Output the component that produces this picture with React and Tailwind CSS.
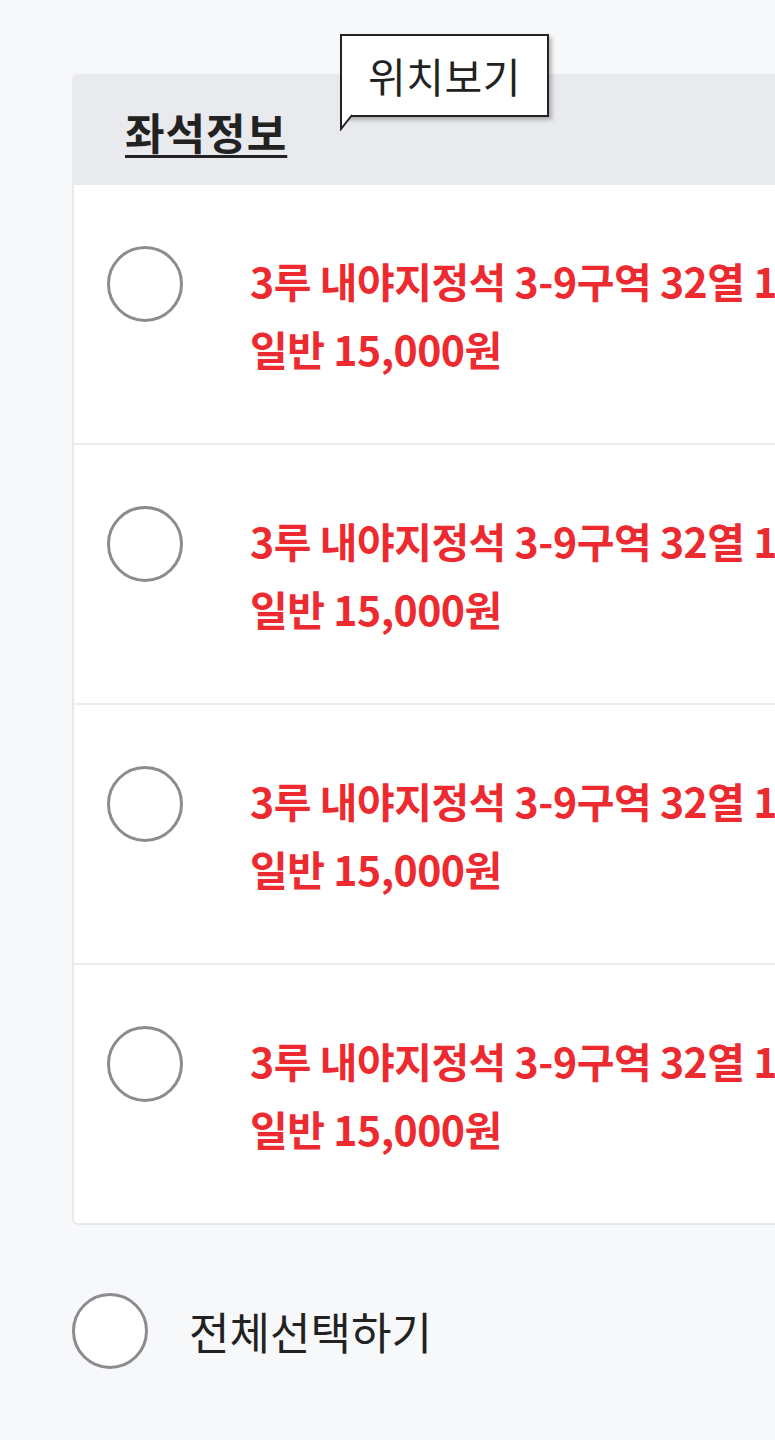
import React from 'react';

const FONT = { fontFamily: '"Noto Sans CJK KR", "Noto Sans", sans-serif' };

const seats = [
  { id: 1, name: '3루 내야지정석 3-9구역 32열 15번', price: '일반 15,000원' },
  { id: 2, name: '3루 내야지정석 3-9구역 32열 16번', price: '일반 15,000원' },
  { id: 3, name: '3루 내야지정석 3-9구역 32열 17번', price: '일반 15,000원' },
  { id: 4, name: '3루 내야지정석 3-9구역 32열 18번', price: '일반 15,000원' },
];

const Radio = () => (
  <div className="w-[76px] h-[76px] shrink-0 rounded-full border-[3px] border-[#8b8c90] bg-white" />
);

const Tooltip = () => (
  <div className="absolute left-[268px] top-[-40px]">
    <div className="relative bg-white border-2 border-[#222] shadow-[3px_3px_4px_rgba(0,0,0,0.25)] w-[209px] h-[83px] flex items-center justify-center">
      <span className="text-[41px] text-[#222] tracking-[0.5px] leading-none">위치보기</span>
    </div>
    <svg className="absolute left-0 top-[79px]" width="16" height="18" viewBox="0 0 16 18">
      <path d="M1 0 L1 16 L12 2" fill="white" stroke="#222" strokeWidth="2" />
    </svg>
  </div>
);

export default function App() {
  return (
    <div style={FONT} className="w-[775px] h-[1440px] bg-[#f7f8fa] overflow-hidden pt-[74px]">
      <div className="ml-[72px] w-[900px] relative">
        <div className="bg-[#e9eaee] h-[111px] rounded-tl-[6px] flex items-center pl-[53px]">
          <h2 className="text-[43px] font-bold text-[#222] underline underline-offset-[5px] decoration-[3px] tracking-[1px] leading-none mt-[4px]">
            좌석정보
          </h2>
          <Tooltip />
        </div>
        <div className="bg-white border-l-2 border-b-2 border-[#e8e9ec] rounded-bl-[6px]">
          {seats.map((seat, idx) => (
            <div
              key={seat.id}
              className={`flex items-center pl-[33px] ${idx > 0 ? 'h-[260px] border-t-2 border-[#ebecef]' : 'h-[258px]'}`}
            >
              <div className="flex items-start">
                <Radio />
                <div className="ml-[67px] text-[#ec2a2f] font-bold text-[41px] leading-[68px] tracking-[-0.5px] whitespace-nowrap">
                  <p>{seat.name}</p>
                  <p>{seat.price}</p>
                </div>
              </div>
            </div>
          ))}
        </div>
      </div>

      <div className="flex items-center ml-[72px] mt-[68px]">
        <Radio />
        <span className="ml-[41px] text-[44px] text-[#222] leading-none">전체선택하기</span>
      </div>
    </div>
  );
}
